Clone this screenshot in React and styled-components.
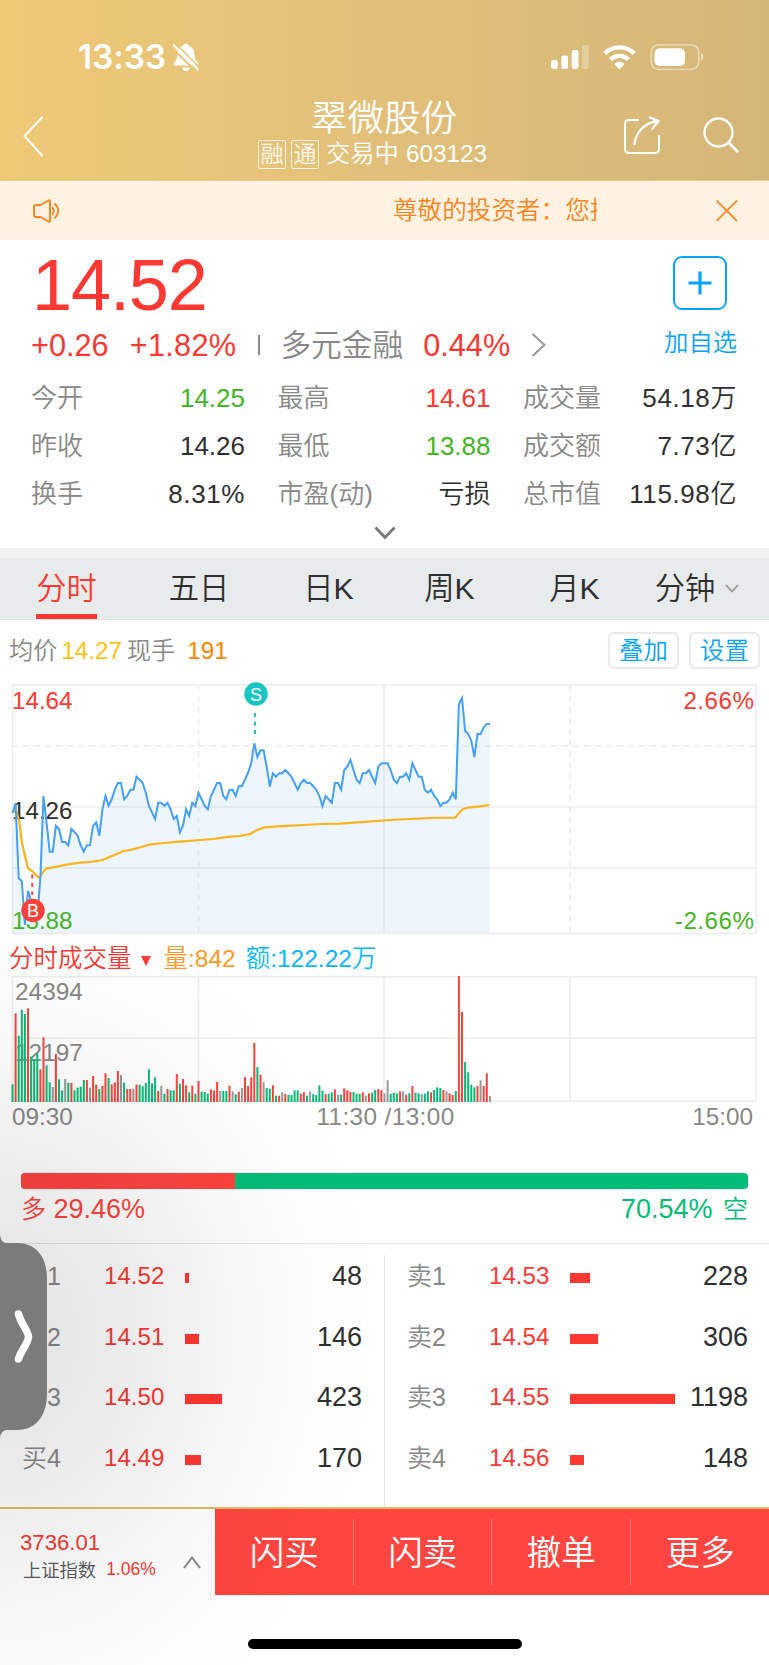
import React from 'react';
import styled, { createGlobalStyle } from 'styled-components';

const GlobalStyle = createGlobalStyle`
  * { box-sizing: border-box; }
  body {
    margin: 0;
    background: #fff;
    font-family: "Liberation Sans", "Noto Sans CJK SC", sans-serif;
    font-weight: 350;
    color: #2f2f2f;
  }
  svg { display: block; flex: none; }
`;

const RED = '#ff3832';
const GREEN = '#45b427';
const DARK = '#2f2f2f';
const BLUE = '#08a4fb';

const Screen = styled.main`
  position: relative;
  width: 769px;
  height: 1665px;
  overflow: hidden;
  background: #fff;
`;

/* ---------- header ---------- */
const Header = styled.header`
  height: 181px;
  color: #fff;
  background: linear-gradient(90deg, #eec976 0%, #e2c07a 50%, #d4b678 100%);
  border-bottom: 1px solid #f0cf8d;
`;
const StatusBar = styled.div`
  display: flex;
  align-items: center;
  height: 74px;
  padding: 40px 65px 0 78px;
`;
const Clock = styled.span`
  flex: none;
  width: 94px;
  font: 600 33.6px/34px Inter, sans-serif;
  letter-spacing: -0.2px;
`;
const StatusIcons = styled.div`
  display: flex;
  align-items: center;
  margin-left: auto;
`;
const NavBar = styled.div`
  display: grid;
  grid-template-columns: 258px 231px 1fr;
  height: 106px;
`;
const BackButton = styled.div`
  padding: 42px 0 0 23px;
`;
const Title = styled.h1`
  margin: 0;
  padding: 25px 0 0 53px;
  font-size: 36.5px;
  line-height: 40px;
  font-weight: 350;
  white-space: nowrap;
`;
const SubTitle = styled.div`
  display: flex;
  align-items: center;
  height: 30px;
  margin-top: 0;
  font-size: 24.3px;
  line-height: 32px;
  white-space: nowrap;
`;
const Badge = styled.span`
  width: 28px;
  height: 29px;
  margin-right: 5px;
  border: 1px solid rgba(255, 255, 255, 0.8);
  border-radius: 2px;
  font-size: 23px;
  line-height: 27px;
  text-align: center;
  color: rgba(255, 255, 255, 0.9);
  & + & { margin-right: 7px; }
`;
const Code = styled.span`
  margin-left: 7px;
`;
const NavActions = styled.div`
  display: flex;
  justify-content: flex-end;
  gap: 42px;
  padding: 42px 30px 0 0;
`;

/* ---------- notice ---------- */
const Notice = styled.section`
  display: flex;
  align-items: center;
  height: 59px;
  padding: 0 31px;
  background: #fff2e0;
  color: #ff8422;
`;
const Marquee = styled.div`
  width: 204px;
  margin: 0 119px 0 332px;
  overflow: hidden;
  white-space: nowrap;
  font-size: 24.6px;
  line-height: 42px;
`;

/* ---------- quote ---------- */
const Quote = styled.section`
  height: 308px;
  padding: 8px 31px 0;
`;
const QuoteTop = styled.div`
  display: flex;
  justify-content: space-between;
  height: 124px;
`;
const Price = styled.div`
  padding-left: 1px;
  font-size: 72px;
  line-height: 74px;
  letter-spacing: -1.1px;
  color: ${RED};
`;
const ChangeRow = styled.div`
  display: flex;
  align-items: center;
  height: 46px;
  font-size: 30.7px;
  line-height: 47px;
  white-space: nowrap;
  color: ${RED};
`;
const Percent = styled.span`
  margin-left: 21px;
  letter-spacing: 0.3px;
`;
const Rule = styled.i`
  width: 2px;
  height: 20px;
  margin: 0 20px 0 22px;
  background: #8c8c8c;
`;
const Sector = styled.span`
  margin-right: 20px;
  color: #888;
`;
const AddWatch = styled.div`
  width: 74px;
  color: ${BLUE};
  font-size: 24.4px;
  line-height: 40px;
  white-space: nowrap;
`;
const AddBox = styled.div`
  display: grid;
  place-items: center;
  width: 54px;
  height: 54px;
  margin: 8px 0 13px 9px;
  border: 2px solid ${BLUE};
  border-radius: 9px;
`;
const Stats = styled.dl`
  display: grid;
  grid-template-columns: 214px 213px 214px;
  column-gap: 32.5px;
  margin: 0;
  padding-top: 2px;
`;
const Stat = styled.div`
  display: flex;
  justify-content: space-between;
  height: 48px;
  font-size: 26px;
  line-height: 48px;
  white-space: nowrap;
`;
const StatLabel = styled.dt`
  color: #888;
`;
const StatValue = styled.dd`
  margin: 0;
  color: ${(p) => p.$color || DARK};
  letter-spacing: ${(p) => (p.$loose ? '0.6px' : 0)};
`;
const Expand = styled.div`
  display: flex;
  justify-content: center;
  padding-top: 8px;
`;

/* ---------- tabs ---------- */
const Tabs = styled.nav`
  display: grid;
  grid-template-columns: 133px 132px 127px 115px 135px 127px;
  height: 72px;
  border-top: 10px solid #f1f1f1;
  border-bottom: 1px solid #e0e3e3;
  background: #e8ebeb;
`;
const Tab = styled.div`
  display: flex;
  justify-content: center;
  align-items: center;
  gap: 10px;
  font-size: 30.3px;
  line-height: 62px;
  color: ${(p) => (p.$active ? RED : DARK)};
  padding-right: ${(p) => (p.$menu ? '17px' : 0)};
`;
const TabLabel = styled.span`
  height: 61px;
  border-bottom: ${(p) => (p.$active ? `5px solid ${RED}` : '0')};
`;

/* ---------- charts ---------- */
const ChartInfo = styled.div`
  display: flex;
  align-items: center;
  height: 62px;
  padding: 0 9px 1px;
  font-size: 24.2px;
  line-height: 36px;
  white-space: nowrap;
  color: #888;
`;
const Figure = styled.span`
  margin: ${(p) => p.$margin || 0};
  color: ${(p) => p.$color};
`;
const ChipButton = styled.button`
  width: 71px;
  height: 37px;
  margin: 0 0 0 10px;
  padding: 0;
  border: 2px solid #ebebeb;
  border-radius: 6px;
  background: #fff;
  color: ${BLUE};
  font: inherit;
  font-size: 24.4px;
  line-height: 33px;
  &:first-of-type { margin-left: auto; }
`;
const VolumeInfo = styled.div`
  display: flex;
  align-items: center;
  height: 36px;
  padding: 1px 9px 0;
  font-size: 24.5px;
  line-height: 36px;
  white-space: nowrap;
`;
const Axis = styled.div`
  display: flex;
  justify-content: space-between;
  height: 30px;
  padding: 0 16px 0 12px;
  font-size: 24.3px;
  line-height: 30px;
  color: #888;
`;
const AxisMid = styled.span`
  padding-left: 6px;
  letter-spacing: 0.4px;
`;

/* ---------- long / short ratio ---------- */
const Ratio = styled.section`
  height: 112px;
  padding: 41px 21px 0;
  border-bottom: 1px solid #e6e6e6;
`;
const RatioBar = styled.div`
  display: flex;
  height: 16px;
  border-radius: 4px;
  overflow: hidden;
  background: #02bd78;
`;
const RatioFill = styled.div`
  background: #ff433f;
`;
const RatioLabels = styled.div`
  display: flex;
  justify-content: space-between;
  font-size: 27px;
  line-height: 41px;
`;
const RatioLabel = styled.span`
  color: ${(p) => p.$color};
  word-spacing: ${(p) => p.$gap}px;
`;
const Small = styled.small`
  font-size: 25px;
`;

/* ---------- order book ---------- */
const Book = styled.section`
  display: grid;
  grid-template-columns: 384px 385px;
  height: 263px;
  overflow: hidden;
`;
const BookSide = styled.div`
  padding: ${(p) => (p.$sell ? '0.5px 21px 0 22px' : '0.5px 22px 0 22px')};
  border-left: ${(p) => (p.$sell ? '1px solid #e6e6e6' : '0')};
  margin-top: 11px;
`;
const BookRow = styled.div`
  display: grid;
  grid-template-columns: 82px 81px 1fr auto;
  align-items: center;
  height: 60.8px;
  margin-top: ${(p) => (p.$first ? '-10px' : 0)};
  font-size: 24.1px;
  line-height: 40px;
  white-space: nowrap;
`;
const Level = styled.span`
  font-size: 25px;
  color: #888;
`;
const BookPrice = styled.span`
  color: ${RED};
`;
const DepthBar = styled.i`
  height: 10px;
  margin-top: 4px;
  background: ${RED};
`;
const Quantity = styled.span`
  font-size: 27px;
`;

/* ---------- footer ---------- */
const Footer = styled.footer`
  display: grid;
  grid-template-columns: 215px repeat(4, 138.5px);
  height: 88px;
  border-top: 2px solid #e4bb64;
`;
const IndexPanel = styled.div`
  display: flex;
  justify-content: space-between;
  padding: 22px 14px 0 20px;
  white-space: nowrap;
`;
const IndexValue = styled.div`
  font-size: 22.2px;
  line-height: 24px;
  color: ${RED};
`;
const IndexName = styled.div`
  display: flex;
  gap: 10px;
  padding-left: 3px;
  font-size: 18.3px;
  line-height: 32px;
  color: #555;
`;
const IndexChange = styled.span`
  font-size: 17.5px;
  line-height: 29px;
  color: ${RED};
`;
const UpArrow = styled.div`
  padding-top: 25px;
`;
const Action = styled.button`
  padding: 0;
  border: 0;
  height: 86px;
  background: #ff4540;
  color: #fff;
  font: inherit;
  font-size: 34.5px;
`;
const ActionLabel = styled.span`
  display: block;
  height: 66px;
  padding-left: 1px;
  line-height: 68px;
  border-right: ${(p) => (p.$last ? '0' : '1px solid #ff7772')};
`;
const HomeIndicator = styled.div`
  width: 274px;
  height: 10px;
  margin: 44px auto 0;
  border-radius: 5px;
  background: #000;
`;

/* ---------- floating drawer handle ---------- */
const Shade = styled.div`
  position: absolute;
  left: 0;
  top: 880px;
  width: 400px;
  height: 785px;
  pointer-events: none;
  background: radial-gradient(ellipse 380px 440px at 0 456px, rgba(0, 0, 0, 0.11) 0%, rgba(0, 0, 0, 0.075) 35%, rgba(0, 0, 0, 0.022) 70%, rgba(0, 0, 0, 0) 100%);
`;
const Handle = styled.div`
  position: absolute;
  left: 0;
  top: 1230px;
`;

/* y of the price line for each minute, in thirds of a pixel */
const PRICE = [
  398, 370, 595, 603, 735, 632, 662, 715, 715, 590, 348, 430, 515, 515, 437, 447, 486, 486, 496, 447, 456, 467, 496, 515, 496,
  496, 437, 427, 467, 388, 348, 377, 358, 329, 309, 309, 358, 348, 329, 329, 290, 299, 309, 338, 378, 397, 417, 368, 368, 378,
  368, 388, 417, 408, 457, 437, 388, 408, 368, 378, 338, 358, 378, 388, 348, 329, 309, 309, 348, 358, 329, 329, 348, 319, 319,
  299, 278, 250, 190, 231, 211, 211, 260, 320, 280, 290, 280, 280, 270, 280, 290, 310, 329, 309, 299, 309, 309, 319, 329, 348,
  378, 348, 358, 368, 309, 309, 329, 270, 260, 240, 270, 299, 309, 280, 280, 270, 290, 309, 260, 250, 250, 250, 270, 299, 309,
  290, 290, 280, 299, 250, 270, 290, 290, 329, 338, 329, 348, 358, 378, 368, 368, 358, 338, 358, 72, 54, 152, 162, 182, 231,
  162, 162, 142, 132, 132,
];
const AVERAGE = [
  [38, 398], [47, 390], [57, 420], [66, 490], [84, 565], [96, 573], [118, 595], [130, 575], [140, 565], [158, 562], [205, 553],
  [240, 548], [270, 546], [308, 540], [326, 532], [344, 525], [370, 513], [400, 508], [447, 494], [490, 489], [540, 485],
  [600, 480], [640, 477], [690, 470], [720, 468], [750, 462], [765, 453], [790, 443], [820, 440], [965, 432], [1020, 431],
  [1115, 424], [1170, 420], [1290, 414], [1366, 413], [1376, 400], [1388, 388], [1403, 383], [1435, 380], [1468, 375],
];
/* colour and top of each one-minute volume bar */
const VOLUME = `g433 r220 g287 g209 g222 r205 g350 g358 g340 r388 r292 g376 g427 k441 r342 g418 g451 k417 g428 r429 g451 g443 g440
g420 r420 k443 r408 r434 g447 r438 r400 g414 r433 r427 r393 k405 g428 r447 r447 k446 r434 g434 g439 g429 g388 g430 g412 r453 k438
g461 r447 g451 g451 r402 g431 r417 r436 g457 r437 g461 r423 g455 g456 g461 r448 r452 r426 k453 g453 g453 r437 k454 g463 r455 k444
r411 r438 r412 r309 g381 r404 k427 g444 g446 r436 g467 r467 k457 r462 g465 g465 g451 g451 r461 r457 g467 k454 g463 g465 g436 g452
r462 g461 g457 r448 k465 g464 r445 r451 r455 g456 g461 g462 r457 k467 r460 g458 g450 r447 r451 k460 k421 g462 g458 g460 r454 k454
r464 g460 r438 g458 g460 k462 g461 g454 r457 g450 g442 g444 r450 k454 r460 r465 g453 r108 r216 g366 g397 g434 g442 r438 k421 r438
r400 k468`.split(/\s+/);
const BAR_COLORS = { r: '#ff423c', g: '#08ba76', k: '#999' };
const minuteX = (i) => 12.5 + i * 3.1;

const pricePoints = PRICE.map((y, i) => `${minuteX(i).toFixed(1)},${(y / 3 - 2).toFixed(1)}`).join(' ');
const averagePoints = AVERAGE.map(([x, y]) => `${(x / 3).toFixed(1)},${(y / 3 - 2).toFixed(1)}`).join(' ');

function PriceChart() {
  return (
    <svg width="769" height="258" viewBox="0 0 769 258" fontSize="24.2">
      <g fill="none" stroke="#eee" strokeWidth="1.6">
        <rect x="12.5" y="3" width="743.5" height="248.5" />
        <path d="M12 125H756M12 186H756M384 3V251" />
        <path d="M12 64H756M198.500 3V251M570 3V251" strokeDasharray="6 5" />
      </g>
      <polygon points={`12.5,251 ${pricePoints} ${minuteX(154)},251`} fill="rgba(74,160,240,0.1)" />
      <text x="12" y="26.500" fill={RED}>14.64</text>
      <text x="12" y="136.500" fill={DARK}>14.26</text>
      <text x="12" y="247" fill={GREEN}>13.88</text>
      <text x="754.500" y="26.500" textAnchor="end" letterSpacing=".5" fill={RED}>2.66%</text>
      <text x="754.500" y="247" textAnchor="end" letterSpacing=".5" fill={GREEN}>-2.66%</text>
      <polyline points={averagePoints} fill="none" stroke="#ffb31a" strokeWidth="2.200" strokeLinejoin="round" />
      <polyline points={pricePoints} fill="none" stroke="#45a0f6" strokeWidth="2" />
      <path d="M255 31V52" stroke="#1dc7c1" strokeWidth="2" strokeDasharray="4 4.500" />
      <circle cx="256" cy="12" r="11.700" fill="#18c6c1" />
      <text x="256" y="18.500" fontSize="18" textAnchor="middle" fill="#fff">S</text>
      <path d="M32.200 192.500V213" stroke="#f64444" strokeWidth="2" strokeDasharray="4 4.500" />
      <circle cx="33" cy="228.500" r="11.700" fill="#ff413b" />
      <text x="33" y="235" fontSize="18" textAnchor="middle" fill="#fff">B</text>
    </svg>
  );
}

function VolumeChart() {
  return (
    <svg width="769" height="126" viewBox="0 0 769 126" fontSize="24.4">
      <g fill="none" stroke="#eee" strokeWidth="1.6">
        <rect x="12.5" y="0.8" width="743.5" height="124.5" />
        <path d="M12 62H756M198.500 0V125M384 0V125M570 0V125" />
      </g>
      <g fill="#888">
        <text x="15" y="24">24394</text>
        <text x="15" y="85">12197</text>
      </g>
      {VOLUME.map((bar, i) => {
        const top = (Number(bar.slice(1)) - 108) / 3;
        return <rect key={i} x={minuteX(i) - 1} y={top} width="2" height={126 - top} fill={BAR_COLORS[bar[0]]} />;
      })}
    </svg>
  );
}

const STATS = [
  ['今开', '14.25', GREEN], ['最高', '14.61', RED], ['成交量', '54.18万', DARK, true],
  ['昨收', '14.26'], ['最低', '13.88', GREEN], ['成交额', '7.73亿', DARK, true],
  ['换手', '8.31%', DARK, true], ['市盈(动)', '亏损'], ['总市值', '115.98亿', DARK, true],
];
const BUY = [['买1', '14.52', 48, 4], ['买2', '14.51', 146, 13.5], ['买3', '14.50', 423, 36.5], ['买4', '14.49', 170, 15.5]];
const SELL = [['卖1', '14.53', 228, 20], ['卖2', '14.54', 306, 27.5], ['卖3', '14.55', 1198, 105], ['卖4', '14.56', 148, 13.5]];

function Orders({ rows, sell }) {
  return (
    <BookSide $sell={sell}>
      {rows.map(([level, price, quantity, width], i) => (
        <BookRow key={level} $first={i === 0}>
          <Level>{level}</Level>
          <BookPrice>{price}</BookPrice>
          <DepthBar style={{ width }} />
          <Quantity>{quantity}</Quantity>
        </BookRow>
      ))}
    </BookSide>
  );
}

export default function App() {
  return (
    <Screen>
      <GlobalStyle />
      <Header>
        <StatusBar>
          <Clock>13:33</Clock>
          <svg width="28" height="30" viewBox="0 0 28 30">
            <path d="M14 1.500c-1.700 0-2.800 1-3 2.400C7 5.300 5.500 8.500 5.500 12c0 4.500-1 6.200-3.300 8.400-1.300 1.300-.8 3 .9 3h21.800c1.700 0 2.200-1.700.9-3-2.300-2.200-3.300-3.900-3.300-8.400 0-3.500-1.500-6.700-5.500-8.100-.2-1.400-1.300-2.400-3-2.400zM10 25.400h8c-.3 2-1.900 3.400-4 3.400s-3.700-1.400-4-3.400z" fill="#fff" />
            <path d="M-.500 5.500 24.800 30" stroke="#e8c67a" strokeWidth="2.200" />
            <path d="M1.800 3.200 26 27.500" stroke="#fff" strokeWidth="2.200" strokeLinecap="round" />
            <path d="M4.500 2.500 28 26" stroke="#e8c67a" strokeWidth="1.600" />
          </svg>
          <StatusIcons>
            <svg width="40" height="26" viewBox="0 0 40 26" fill="#fff">
              <rect x="1" y="16" width="6.800" height="9" rx="2" />
              <rect x="11.300" y="11.500" width="6.800" height="13.500" rx="2" />
              <rect x="21.700" y="6" width="6.800" height="19" rx="2" />
              <rect x="32" y="1" width="6.800" height="24" rx="2" opacity=".28" />
            </svg>
            <svg width="33" height="26" viewBox="0 0 33 26" style={{ marginLeft: 13 }}>
              <g fill="none" stroke="#fff" strokeWidth="4.400">
                <path d="M1.800 9.400a21 21 0 0 1 29.400 0" />
                <path d="M7.500 15.500a13 13 0 0 1 18 0" />
              </g>
              <path d="M11.300 20a7.300 7.300 0 0 1 10.400 0L16.500 25.500z" fill="#fff" />
            </svg>
            <svg width="54" height="28" viewBox="0 0 54 28" style={{ marginLeft: 14 }}>
              <rect x="1.200" y="1.800" width="47.500" height="24.500" rx="7.500" fill="none" stroke="#fff" strokeOpacity=".42" strokeWidth="1.800" />
              <rect x="4.500" y="5.200" width="30.500" height="17.800" rx="5" fill="#fff" />
              <path d="M51 10v8c3-1.500 3-6.500 0-8z" fill="#fff" fillOpacity=".5" />
            </svg>
          </StatusIcons>
        </StatusBar>
        <NavBar>
          <BackButton>
            <svg width="21" height="41" viewBox="0 0 21 41">
              <path d="M19.500 1 1.500 20 19.500 40" fill="none" stroke="#fff" strokeWidth="2" />
            </svg>
          </BackButton>
          <div>
            <Title>翠微股份</Title>
            <SubTitle>
              <Badge>融</Badge>
              <Badge>通</Badge>
              <span>交易中</span>
              <Code>603123</Code>
            </SubTitle>
          </div>
          <NavActions>
            <svg width="38" height="38" viewBox="0 0 38 38" fill="none" stroke="#fff" strokeWidth="2">
              <path d="M16 4H6Q2 4 2 8v25q0 4 4 4h26q4 0 4-4V19" />
              <path d="M11.500 28C13 16 21 7 35 5M27 1.500 35.500 5 29.500 12.500" strokeWidth="2.300" strokeLinecap="round" />
            </svg>
            <svg width="36" height="38" viewBox="0 0 36 38" fill="none" stroke="#fff" strokeWidth="2.300">
              <circle cx="15.500" cy="16.500" r="14" />
              <path d="M25.500 26.500 35 36" strokeWidth="2.800" />
            </svg>
          </NavActions>
        </NavBar>
      </Header>

      <Notice>
        <svg width="30" height="26" viewBox="0 0 30 26" fill="none" stroke="#ff8422" strokeWidth="2" strokeLinejoin="round">
          <path d="M9.500 7H5Q3 7 3 9v8q0 2 2 2h4.500l8 4.500Q19 24.500 19 22.500V3.500Q19 1.500 17.500 2.500z" />
          <path d="M21 9q3.500 4 0 8M23.500 5.500q7.500 7 0 15" strokeWidth="1.800" />
        </svg>
        <Marquee>尊敬的投资者：您投</Marquee>
        <svg width="22" height="22" viewBox="0 0 22 22" stroke="#ff8a30" strokeWidth="1.800">
          <path d="M.500.500 21 21M21 .500.500 21" />
        </svg>
      </Notice>

      <Quote>
        <QuoteTop>
          <div>
            <Price>14.52</Price>
            <ChangeRow>
              <span>+0.26</span>
              <Percent>+1.82%</Percent>
              <Rule />
              <Sector>多元金融</Sector>
              <span>0.44%</span>
              <svg width="16" height="24" viewBox="0 0 16 24" style={{ marginLeft: 21 }}>
                <path d="M1.500 1 13.500 12 1.500 23" fill="none" stroke="#999" strokeWidth="2" />
              </svg>
            </ChangeRow>
          </div>
          <AddWatch>
            <AddBox>
              <svg width="24" height="24" viewBox="0 0 24 24" stroke={BLUE} strokeWidth="3.200">
                <path d="M12 .500V23.500M.500 12H23.500" />
              </svg>
            </AddBox>
            加自选
          </AddWatch>
        </QuoteTop>
        <Stats>
          {STATS.map(([label, value, color, loose]) => (
            <Stat key={label}>
              <StatLabel>{label}</StatLabel>
              <StatValue $color={color} $loose={loose}>{value}</StatValue>
            </Stat>
          ))}
        </Stats>
        <Expand>
          <svg width="22" height="14" viewBox="0 0 22 14">
            <path d="M1.500 1.500 11 11.500 20.500 1.500" fill="none" stroke="#777" strokeWidth="2.800" />
          </svg>
        </Expand>
      </Quote>

      <Tabs>
        <Tab $active><TabLabel $active>分时</TabLabel></Tab>
        <Tab><TabLabel>五日</TabLabel></Tab>
        <Tab><TabLabel>日K</TabLabel></Tab>
        <Tab><TabLabel>周K</TabLabel></Tab>
        <Tab><TabLabel>月K</TabLabel></Tab>
        <Tab $menu>
          <TabLabel>分钟</TabLabel>
          <svg width="14" height="9" viewBox="0 0 14 9">
            <path d="M1 1 7 7.500 13 1" fill="none" stroke="#999" strokeWidth="1.800" />
          </svg>
        </Tab>
      </Tabs>

      <ChartInfo>
        <span>均价</span>
        <Figure $color="#fcc414" $margin="0 5px 0 4px">14.27</Figure>
        <span>现手</span>
        <Figure $color="#ff8500" $margin="0 0 0 12px">191</Figure>
        <ChipButton>叠加</ChipButton>
        <ChipButton>设置</ChipButton>
      </ChartInfo>
      <PriceChart />
      <VolumeInfo>
        <Figure $color={RED}>分时成交量</Figure>
        <svg width="10" height="10" viewBox="0 0 10 10" style={{ margin: '4px 13px 0 9px' }}>
          <path d="M0 0H10L5 10z" fill={RED} />
        </svg>
        <Figure $color="#ff9b27">量:842</Figure>
        <Figure $color="#08b8ff" $margin="0 0 0 10px">额:122.22万</Figure>
      </VolumeInfo>
      <VolumeChart />
      <Axis>
        <span>09:30</span>
        <AxisMid>11:30 /13:00</AxisMid>
        <span>15:00</span>
      </Axis>

      <Ratio>
        <RatioBar>
          <RatioFill style={{ width: '29.46%' }} />
        </RatioBar>
        <RatioLabels>
          <RatioLabel $color="#ff433f" $gap={0}><Small>多</Small> 29.46%</RatioLabel>
          <RatioLabel $color="#02bd78" $gap={3}>70.54% <Small>空</Small></RatioLabel>
        </RatioLabels>
      </Ratio>

      <Book>
        <Orders rows={BUY} />
        <Orders rows={SELL} sell />
      </Book>

      <Footer>
        <IndexPanel>
          <div>
            <IndexValue>3736.01</IndexValue>
            <IndexName>
              上证指数
              <IndexChange>1.06%</IndexChange>
            </IndexName>
          </div>
          <UpArrow>
            <svg width="18" height="13" viewBox="0 0 18 13">
              <path d="M1 12 9 1.500 17 12" fill="none" stroke="#888" strokeWidth="2" />
            </svg>
          </UpArrow>
        </IndexPanel>
        <Action><ActionLabel>闪买</ActionLabel></Action>
        <Action><ActionLabel>闪卖</ActionLabel></Action>
        <Action><ActionLabel>撤单</ActionLabel></Action>
        <Action><ActionLabel $last>更多</ActionLabel></Action>
      </Footer>
      <HomeIndicator />

      <Shade />
      <Handle>
        <svg width="48" height="214" viewBox="0 0 48 214">
          <path d="M0 5Q1 13 7 13H17C37 13 47 28 47 48V164C47 184 37 200 17 200H7Q1 200 0 208z" fill="#7c7b7b" />
          <path d="M18.500 84C21 94 28.500 101 28.500 107S21 120 18.500 129" fill="none" stroke="#fff" strokeWidth="7.500" strokeLinecap="round" strokeLinejoin="round" />
        </svg>
      </Handle>
    </Screen>
  );
}
